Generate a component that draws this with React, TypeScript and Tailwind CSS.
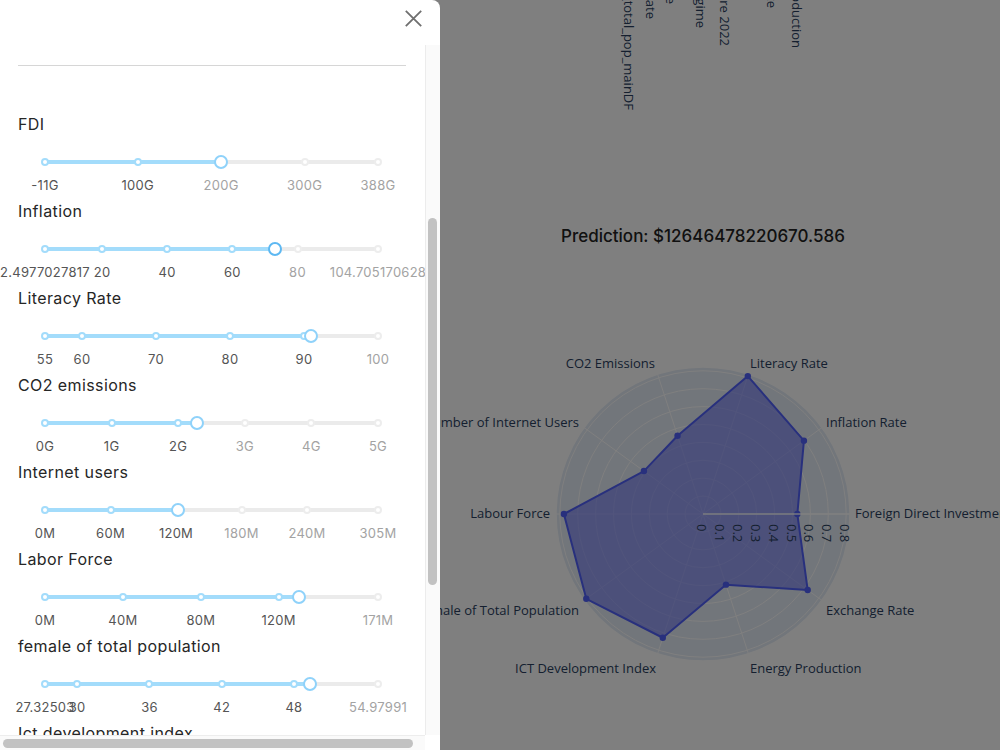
import { useMemo } from 'react'

// 指标滑块配置
interface SliderMark {
  v: number
  label: string
}

interface FeatureSlider {
  title: string
  min: number
  max: number
  value: number
  focused?: boolean
  marks: SliderMark[]
}

const m = (v: number, label: string): SliderMark => ({ v, label })

const features: FeatureSlider[] = [
  {
    title: 'FDI',
    min: -11,
    max: 388,
    value: 199.5,
    marks: [m(-11, '-11G'), m(100, '100G'), m(200, '200G'), m(300, '300G'), m(388, '388G')],
  },
  {
    title: 'Inflation',
    min: 2.4977027817,
    max: 104.705170628,
    value: 73.2,
    focused: true,
    marks: [
      m(2.4977027817, '2.4977027817'),
      m(20, '20'),
      m(40, '40'),
      m(60, '60'),
      m(80, '80'),
      m(104.705170628, '104.705170628'),
    ],
  },
  {
    title: 'Literacy Rate',
    min: 55,
    max: 100,
    value: 90.9,
    marks: [m(55, '55'), m(60, '60'), m(70, '70'), m(80, '80'), m(90, '90'), m(100, '100')],
  },
  {
    title: 'CO2 emissions',
    min: 0,
    max: 5,
    value: 2.28,
    marks: [m(0, '0G'), m(1, '1G'), m(2, '2G'), m(3, '3G'), m(4, '4G'), m(5, '5G')],
  },
  {
    title: 'Internet users',
    min: 0,
    max: 305,
    value: 121.8,
    marks: [m(0, '0M'), m(60, '60M'), m(120, '120M'), m(180, '180M'), m(240, '240M'), m(305, '305M')],
  },
  {
    title: 'Labor Force',
    min: 0,
    max: 171,
    value: 130.4,
    marks: [m(0, '0M'), m(40, '40M'), m(80, '80M'), m(120, '120M'), m(171, '171M')],
  },
  {
    title: 'female of total population',
    min: 27.32503,
    max: 54.97991,
    value: 49.33,
    marks: [m(27.32503, '27.32503'), m(30, '30'), m(36, '36'), m(42, '42'), m(48, '48'), m(54.97991, '54.97991')],
  },
  {
    title: 'Ict development index',
    min: 1,
    max: 9,
    value: 6.2,
    marks: [m(1, '1'), m(3, '3'), m(5, '5'), m(7, '7'), m(9, '9')],
  },
]

function MarkSlider({ item }: { item: FeatureSlider }) {
  const pct = (v: number) => ((v - item.min) / (item.max - item.min)) * 100
  const valuePct = pct(item.value)

  return (
    <div className="relative ml-[27px] h-[63px] w-[333px]">
      {/* 轨道 */}
      <div className="absolute left-0 right-0 top-[24px] h-1 rounded-full bg-[#ebebeb]" />
      <div
        className="absolute left-0 top-[24px] h-1 rounded-full bg-[#a3dcfb]"
        style={{ width: `${valuePct}%` }}
      />

      {/* 刻度点 */}
      {item.marks.map((mk) => {
        const active = mk.v <= item.value
        return (
          <span
            key={'d' + mk.label}
            className={`absolute top-[22px] -ml-1 size-2 rounded-full border-2 bg-white ${
              active ? 'border-[#a3dcfb]' : 'border-[#ededed]'
            }`}
            style={{ left: `${pct(mk.v)}%` }}
          />
        )
      })}

      {/* 拖动手柄 */}
      <span
        className={`absolute top-[19px] -ml-[7px] size-[14px] rounded-full border-2 bg-white ${
          item.focused ? 'border-[#5db8f2]' : 'border-[#8fd2fa]'
        }`}
        style={{ left: `${valuePct}%` }}
      />

      {/* 刻度文字 */}
      {item.marks.map((mk) => {
        const active = mk.v <= item.value
        return (
          <span
            key={'l' + mk.label}
            className={`absolute top-[40px] -translate-x-1/2 whitespace-nowrap text-[13px] leading-[18px] tracking-[0.02em] ${
              active ? 'text-[#555555]' : 'text-[#a3a3a3]'
            }`}
            style={{ left: `${pct(mk.v)}%` }}
          >
            {mk.label}
          </span>
        )
      })}
    </div>
  )
}

function SettingsDrawer() {
  return (
    <aside className="absolute left-0 top-0 z-10 flex h-[750px] w-[440px] flex-col rounded-tr-[8px] bg-white">
      {/* 头部关闭按钮 */}
      <div className="flex h-[45px] shrink-0 justify-end pr-[18px] pt-[10px]">
        <button className="h-[17px] w-[17px] text-[#6f6f6f]">
          <svg width="17" height="17" viewBox="0 0 17 17" fill="none" stroke="currentColor" strokeWidth="1.8">
            <path d="M0.8 0.8 16.2 16.2M16.2 0.8 0.8 16.2" />
          </svg>
        </button>
      </div>

      {/* 内容与滚动条 */}
      <div className="flex min-h-0 flex-1">
        <div className="min-w-0 flex-1 overflow-hidden pl-[18px]">
          <div className="mt-[20px] w-[388px] border-t border-[#d6d6d6]" />
          <div className="mt-[46px]">
            {features.map((f) => (
              <div key={f.title}>
                <div className="text-base leading-6 tracking-[0.025em] text-[#262626]">{f.title}</div>
                <MarkSlider item={f} />
              </div>
            ))}
          </div>
        </div>
        <div className="w-[15px] shrink-0 border-l border-[#ececec] bg-[#fafafa] pl-[2px] pr-[3px]">
          <div className="mt-[173px] h-[367px] w-[9px] rounded-full bg-[#c2c2c2]" />
        </div>
      </div>

      {/* 横向滚动条 */}
      <div className="flex h-[15px] shrink-0">
        <div className="w-[425px] border-t border-[#ededed] bg-[#fafafa] pt-[3px]">
          <div className="ml-[3px] h-[9px] w-[410px] rounded-full bg-[#c2c2c2]" />
        </div>
        <div className="flex-1 bg-white" />
      </div>
    </aside>
  )
}

// 上方柱状图被截断的竖排坐标文字
const axisTicks = [
  { x: 624, end: 110, text: 'female_of_total_pop_mainDF' },
  { x: 646, end: 19, text: 'Inflation Rate' },
  { x: 666, end: 4, text: 'Labour Force' },
  { x: 696, end: 28, text: 'Political Regime' },
  { x: 720, end: 46, text: 'Infrastructure 2022' },
  { x: 767, end: 8, text: 'Exchange Rate' },
  { x: 792, end: 48, text: 'Energy Production' },
]

function BarAxisLabels() {
  return (
    <svg width="1000" height="120" className="block">
      {axisTicks.map((t) => (
        <text
          key={t.text}
          transform={`translate(${t.x},${t.end}) rotate(90)`}
          textAnchor="end"
          fontSize="13"
          fill="#2a3f5f"
          fontFamily="'Open Sans', sans-serif"
        >
          {t.text}
        </text>
      ))}
    </svg>
  )
}

const radarData: [string, number][] = [
  ['Foreign Direct Investment', 0.527],
  ['Inflation Rate', 0.697],
  ['Literacy Rate', 0.81],
  ['CO2 Emissions', 0.46],
  ['Number of Internet Users', 0.408],
  ['Labour Force', 0.777],
  ['Female of Total Population', 0.806],
  ['ICT Development Index', 0.727],
  ['Energy Production', 0.415],
  ['Exchange Rate', 0.723],
]

const labelPos: { x: number; y: number; anchor: 'start' | 'end' }[] = [
  { x: 502, y: 265, anchor: 'start' },
  { x: 473, y: 174, anchor: 'start' },
  { x: 397, y: 115, anchor: 'start' },
  { x: 302, y: 115, anchor: 'end' },
  { x: 226, y: 174, anchor: 'end' },
  { x: 197, y: 265, anchor: 'end' },
  { x: 226, y: 362, anchor: 'end' },
  { x: 303, y: 420, anchor: 'end' },
  { x: 397, y: 420, anchor: 'start' },
  { x: 473, y: 362, anchor: 'start' },
]

function RadarChart() {
  const cx = 350
  const cy = 266
  const k = 179
  const R = 147

  const pts = useMemo(
    () =>
      radarData.map(([, v], i) => {
        const a = (i * 36 * Math.PI) / 180
        return [cx + v * k * Math.cos(a), cy - v * k * Math.sin(a)]
      }),
    []
  )
  const ticks = [0, 0.1, 0.2, 0.3, 0.4, 0.5, 0.6, 0.7, 0.8]

  return (
    <svg width="700" height="500" className="block" fontFamily="'Open Sans', sans-serif">
      <circle cx={cx} cy={cy} r={R} fill="#e5ecf6" />
      {ticks.slice(1).map((t) => (
        <circle key={t} cx={cx} cy={cy} r={t * k} fill="none" stroke="#ffffff" strokeWidth="1" />
      ))}
      {radarData.map((_, i) => {
        const a = (i * 36 * Math.PI) / 180
        return (
          <line
            key={i}
            x1={cx}
            y1={cy}
            x2={cx + R * Math.cos(a)}
            y2={cy - R * Math.sin(a)}
            stroke="#ffffff"
            strokeWidth="1"
          />
        )
      })}
      <circle cx={cx} cy={cy} r={R} fill="none" stroke="#ffffff" strokeWidth="1.5" />

      <polygon
        points={pts.map((p) => p.join(',')).join(' ')}
        fill="#6670f4"
        fillOpacity="0.6"
        stroke="#5060fa"
        strokeWidth="2"
        strokeLinejoin="round"
      />
      {pts.map((p, i) => (
        <circle key={i} cx={p[0]} cy={p[1]} r="3.2" fill="#5060fa" />
      ))}

      {/* 径向轴 */}
      <line x1={cx} y1={cy} x2={cx + R} y2={cy} stroke="#ffffff" strokeWidth="1.5" strokeOpacity="0.9" />
      {ticks.map((t) => (
        <text
          key={t}
          transform={`translate(${cx + t * k - 6},${cy + 10}) rotate(90)`}
          fontSize="13"
          fill="#2a3f5f"
        >
          {t}
        </text>
      ))}

      {radarData.map(([name], i) => (
        <text
          key={name}
          x={labelPos[i].x}
          y={labelPos[i].y}
          textAnchor={labelPos[i].anchor}
          dominantBaseline="central"
          fontSize="13"
          fill="#2a3f5f"
        >
          {name}
        </text>
      ))}
    </svg>
  )
}

export default function App() {
  return (
    <div className="relative h-[750px] w-[1000px] overflow-hidden bg-white font-['Inter',sans-serif]">
      <main className="flex flex-col">
        <BarAxisLabels />
        <div className="ml-[353px] w-[700px]">
          <h3 className="mt-[104px] h-6 text-center text-[17px] font-medium leading-6 text-[#222222]">
            Prediction: $12646478220670.586
          </h3>
          <RadarChart />
        </div>
      </main>

      {/* 遮罩 */}
      <div className="absolute inset-0 bg-black/50" />

      <SettingsDrawer />
    </div>
  )
}
